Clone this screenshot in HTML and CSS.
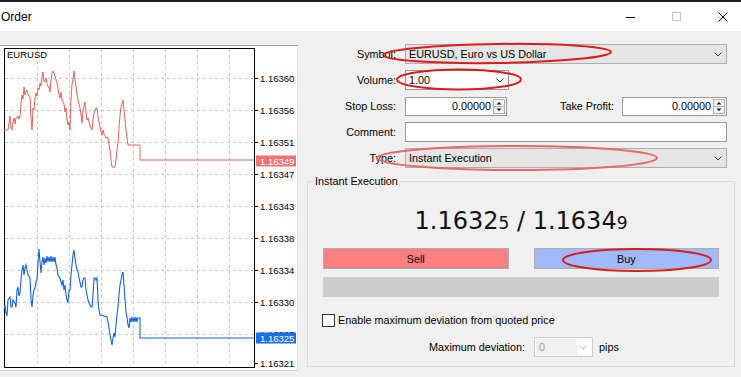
FILE: index.html
```html
<!DOCTYPE html>
<html>
<head>
<meta charset="utf-8">
<title>Order</title>
<link rel="stylesheet" href="styles.css">
</head>
<body>
<div class="topline"></div>
<header class="titlebar">
  <span class="title">Order</span>
  <div class="controls">
    <svg class="ctl" width="10" height="10" viewBox="0 0 10 10"><line x1="0" y1="5.5" x2="9" y2="5.5" stroke="#000"/></svg>
    <svg class="ctl" width="10" height="10" viewBox="0 0 10 10"><rect x="0.5" y="0.5" width="8" height="8" fill="none" stroke="#c4c4c4"/></svg>
    <svg class="ctl" width="10" height="10" viewBox="0 0 10 10"><path d="M0.5 0.5L9.5 9.5M9.5 0.5L0.5 9.5" stroke="#000" fill="none"/></svg>
  </div>
</header>
<main class="main">
  <section class="chart-panel">
    <svg class="chart" width="298" height="326" viewBox="0 45 298 326">
      <rect x="0" y="45" width="298" height="326" fill="#fff"/>
      <line x1="0" y1="45.5" x2="298" y2="45.5" stroke="#a0a0a0"/>
      <line x1="297.5" y1="46" x2="297.5" y2="371" stroke="#e0e0e0"/>
      <line x1="0" y1="370.5" x2="298" y2="370.5" stroke="#d6d6d6"/>
      <g stroke="#c9c9c9" stroke-dasharray="3 3" fill="none">
        <line x1="37.5" y1="49" x2="37.5" y2="367"/>
        <line x1="69.5" y1="49" x2="69.5" y2="367"/>
        <line x1="101.5" y1="49" x2="101.5" y2="367"/>
        <line x1="133.5" y1="49" x2="133.5" y2="367"/>
        <line x1="165.5" y1="49" x2="165.5" y2="367"/>
        <line x1="197.5" y1="49" x2="197.5" y2="367"/>
        <line x1="229.5" y1="49" x2="229.5" y2="367"/>
        <line x1="5" y1="78.5" x2="254" y2="78.5"/>
        <line x1="5" y1="110.5" x2="254" y2="110.5"/>
        <line x1="5" y1="142.5" x2="254" y2="142.5"/>
        <line x1="5" y1="174.5" x2="254" y2="174.5"/>
        <line x1="5" y1="206.5" x2="254" y2="206.5"/>
        <line x1="5" y1="238.5" x2="254" y2="238.5"/>
        <line x1="5" y1="270.5" x2="254" y2="270.5"/>
        <line x1="5" y1="302.5" x2="254" y2="302.5"/>
        <line x1="5" y1="334.5" x2="254" y2="334.5"/>
      </g>
      <rect x="4.5" y="48.5" width="250" height="319" fill="none" stroke="#000"/>
      <g stroke="#000">
        <line x1="255" y1="78.5" x2="258" y2="78.5"/>
        <line x1="255" y1="110.5" x2="258" y2="110.5"/>
        <line x1="255" y1="142.5" x2="258" y2="142.5"/>
        <line x1="255" y1="174.5" x2="258" y2="174.5"/>
        <line x1="255" y1="206.5" x2="258" y2="206.5"/>
        <line x1="255" y1="238.5" x2="258" y2="238.5"/>
        <line x1="255" y1="270.5" x2="258" y2="270.5"/>
        <line x1="255" y1="302.5" x2="258" y2="302.5"/>
        <line x1="255" y1="363.5" x2="258" y2="363.5"/>
      </g>
      <text class="sym" x="7" y="58">EURUSD</text>
      <g class="axis">
        <text x="260" y="82">1.16360</text>
        <text x="260" y="114">1.16356</text>
        <text x="260" y="146">1.16351</text>
        <text x="260" y="178">1.16347</text>
        <text x="260" y="210">1.16343</text>
        <text x="260" y="242">1.16338</text>
        <text x="260" y="274">1.16334</text>
        <text x="260" y="306">1.16330</text>
        <text x="260" y="338">1.16325</text>
        <text x="260" y="367">1.16321</text>
      </g>
      <polyline class="ask" points="4,130 8,130 10,116 11,128 12,130 13,122 14,118 15,124 16,118 18,116 19,119 20,116 21,104 22,95 23,99 24,87 25,95 26,91 27,90 28,94 29,96 30,97 31,118 32,130 33,108 34,110 35,98 36,93 37,96 38,88 39,90 40,83 41,86 42,77 43,72 44,82 45,80 46,78 47,84 48,86 49,88 50,92 51,80 52,73 53,71 54,73 55,76 56,80 57,83 58,88 59,95 60,98 61,92 62,100 63,102 64,104 65,112 66,108 67,120 68,125 69,122 70,130 71,100 72,84 73,80 74,71 75,80 76,87 77,94 78,100 79,104 80,108 81,115 82,123 83,110 84,106 85,102 86,112 87,120 88,118 89,122 90,125 91,128 92,130 93,120 94,113 95,110 96,108 97,108 98,117 99,122 100,127 101,132 102,135 103,130 104,134 105,136 106,138 107,137 108,138 109,144 110,150 111,160 112,167 115,167 116,160 117,150 118,143 119,128 120,116 121,107 122,104 123,100 124,110 125,120 126,130 127,137 128,145 140,145 140,160 254,160"/>
      <polyline class="bid" points="4,310 5,305 6,313 7,316 8,300 10,297 11,307 12,307 13,300 15,303 16,307 17,290 18,287 19,296 20,293 21,280 22,270 23,265 24,275 25,268 26,265 27,270 28,275 29,276 30,278 31,300 32,307 33,295 34,290 35,288 36,282 37,280 38,262 39,249 40,262 41,273 42,262 43,257 44,265 45,258 46,263 47,256 48,262 49,257 50,262 51,256 52,262 53,257 54,262 55,257 56,265 57,268 58,275 59,277 60,278 61,282 62,285 63,280 64,290 65,285 66,295 67,300 68,302 69,290 70,290 71,275 72,265 73,255 74,250 75,258 76,265 77,270 78,272 79,278 80,282 81,287 82,287 83,280 84,278 85,278 86,290 87,295 88,300 89,303 90,305 91,307 92,307 93,295 94,278 95,278 96,280 97,278 98,300 99,310 100,315 104,316 107,317 108,322 109,328 110,335 111,340 112,345 113,338 114,333 115,337 116,325 117,315 118,307 119,295 120,285 121,280 122,275 123,272 124,285 125,300 126,312 127,317 128,325 129,328 130,318 131,322 132,317 133,322 134,317 135,322 136,317 137,322 138,318 140,318 140,338 254,338"/>
      <rect x="256" y="155.5" width="40" height="11" fill="#f47171"/>
      <text class="badge" x="260" y="164.5">1.16349</text>
      <rect x="256" y="332.5" width="40" height="11" fill="#1c6de6"/>
      <text class="badge" x="260" y="341.5">1.16325</text>
    </svg>
  </section>
  <section class="right">
    <div class="form">
      <div class="row">
        <span class="lbl">Symbol:</span>
        <div class="select wide">EURUSD, Euro vs US Dollar
          <svg class="chev" width="8" height="5" viewBox="0 0 8 5"><polyline points="0.5,0.5 4,4 7.5,0.5" fill="none" stroke="#333"/></svg>
        </div>
      </div>
      <div class="row">
        <span class="lbl">Volume:</span>
        <div class="combo">1.00
          <svg class="chev" width="8" height="5" viewBox="0 0 8 5"><polyline points="0.5,0.5 4,4 7.5,0.5" fill="none" stroke="#333"/></svg>
        </div>
      </div>
      <div class="row">
        <span class="lbl">Stop Loss:</span>
        <div class="num sl">0.00000
          <svg class="spin" width="12" height="15" viewBox="0 0 12 15"><rect x="0.5" y="0.5" width="11" height="14" fill="#f2f2f2" stroke="#adadad"/><line x1="1" y1="7.5" x2="11" y2="7.5" stroke="#adadad"/><path d="M3.5 5.5h5L6 3z M3.5 9.5h5L6 12z" fill="#111"/></svg>
        </div>
        <span class="lbl2">Take Profit:</span>
        <div class="num tp">0.00000
          <svg class="spin" width="12" height="15" viewBox="0 0 12 15"><rect x="0.5" y="0.5" width="11" height="14" fill="#f2f2f2" stroke="#adadad"/><line x1="1" y1="7.5" x2="11" y2="7.5" stroke="#adadad"/><path d="M3.5 5.5h5L6 3z M3.5 9.5h5L6 12z" fill="#111"/></svg>
        </div>
      </div>
      <div class="row">
        <span class="lbl">Comment:</span>
        <div class="text wide"></div>
      </div>
      <div class="row">
        <span class="lbl">Type:</span>
        <div class="select wide">Instant Execution
          <svg class="chev" width="8" height="5" viewBox="0 0 8 5"><polyline points="0.5,0.5 4,4 7.5,0.5" fill="none" stroke="#333"/></svg>
        </div>
      </div>
    </div>
    <fieldset class="group">
      <legend>Instant Execution</legend>
      <div class="price">1.1632<span class="pip">5</span> / 1.1634<span class="pip">9</span></div>
      <div class="buttons">
        <button class="btn sell">Sell</button>
        <button class="btn buy">Buy</button>
      </div>
      <div class="bar"></div>
      <div class="check"><span class="box"></span><span>Enable maximum deviation from quoted price</span></div>
      <div class="dev">
        <span>Maximum deviation:</span>
        <div class="devsel"><span class="devval">0</span>
          <svg class="chev" width="8" height="5" viewBox="0 0 8 5"><polyline points="0.5,0.5 4,4 7.5,0.5" fill="none" stroke="#b5b5b5"/></svg>
        </div>
        <span class="pips">pips</span>
      </div>
    </fieldset>
  </section>
</main>
<svg class="marks" width="741" height="377" viewBox="0 0 741 377">
  <ellipse cx="497" cy="53.5" rx="114" ry="9.5" fill="none" stroke="#df1a1a" stroke-width="2" transform="rotate(-0.8 497 53.5)"/>
  <ellipse cx="459" cy="79.5" rx="62" ry="10" fill="none" stroke="#df1a1a" stroke-width="2"/>
  <ellipse cx="517" cy="158" rx="140" ry="12" fill="none" stroke="#e66a66" stroke-width="2"/>
  <ellipse cx="637" cy="260" rx="74" ry="11" fill="none" stroke="#d81c1c" stroke-width="2"/>
</svg>
</body>
</html>
```

FILE: styles.css
```css
html, body {
  margin: 0;
  padding: 0;
}
body {
  width: 741px;
  height: 377px;
  overflow: hidden;
  position: relative;
  background: #f0f0f0;
  font-family: "Liberation Sans", Arial, sans-serif;
  font-size: 10.8px;
  color: #000;
}
.topline {
  height: 2px;
  background: #1e1e1e;
}
.titlebar {
  height: 29px;
  background: #fff;
  display: flex;
  align-items: center;
  justify-content: space-between;
}
.title {
  font-size: 12px;
  padding-left: 1px;
}
.controls {
  display: flex;
  align-items: center;
  gap: 36px;
  padding-right: 13px;
}
.ctl {
  display: block;
}
.main {
  display: flex;
  padding-top: 13px;
}
.chart-panel {
  width: 298px;
  height: 326px;
  margin-top: 1px;
  flex: none;
}
.chart {
  display: block;
}
.chart .sym {
  font-family: "Liberation Sans", Arial, sans-serif;
  font-size: 9.5px;
  fill: #000;
}
.chart .axis text {
  font-family: "Liberation Sans", Arial, sans-serif;
  font-size: 9.5px;
  fill: #000;
}
.chart .badge {
  font-family: "Liberation Sans", Arial, sans-serif;
  font-size: 9.5px;
  fill: #fff;
}
.ask {
  fill: none;
  stroke: #e8625c;
  stroke-width: 1;
}
.bid {
  fill: none;
  stroke: #1463dc;
  stroke-width: 1.1;
}
.right {
  flex: 1;
}
.form {
  width: 429px;
}
.row {
  display: flex;
  align-items: center;
  height: 20px;
  margin-bottom: 6px;
}
.lbl {
  width: 98px;
  text-align: right;
  margin-right: 9px;
  flex: none;
}
.lbl2 {
  flex: 1;
  text-align: right;
  margin-right: 8px;
}
.select, .combo, .num, .text {
  box-sizing: border-box;
  height: 20px;
  display: flex;
  align-items: center;
  flex: none;
}
.select {
  border: 1px solid #adadad;
  background: #e5e5e5;
  padding-left: 3px;
}
.wide {
  width: 322px;
}
.chev {
  display: block;
  margin-left: auto;
  margin-right: 4px;
}
.combo {
  width: 104px;
  border: 1px solid #9a9a9a;
  background: #fff;
  padding-left: 3px;
}
.num {
  height: 19px;
  border: 1px solid #9a9a9a;
  background: #fff;
  justify-content: flex-end;
}
.sl {
  width: 102px;
}
.tp {
  width: 105px;
}
.spin {
  display: block;
  margin: 0 1px 0 2px;
}
.text {
  border: 1px solid #9a9a9a;
  background: #fff;
}
.group {
  margin: 3px 6px 0 9px;
  padding: 0 15px 9px 15px;
  border: 1px solid #dcdcdc;
  min-width: 0;
}
.group legend {
  padding: 0 1px;
  margin-left: -9px;
  line-height: 14px;
  font-size: 10.8px;
}
.price {
  margin-top: 19px;
  height: 28px;
  line-height: 28px;
  text-align: center;
  font-family: "DejaVu Sans", Verdana, sans-serif;
  font-size: 24px;
  color: #111;
}
.pip {
  font-size: 17px;
}
.buttons {
  display: flex;
  gap: 25px;
  margin-top: 13px;
}
.btn {
  flex: 1;
  height: 21px;
  margin: 0;
  padding: 0;
  border: 1px solid #adadad;
  font-family: "Liberation Sans", Arial, sans-serif;
  font-size: 10.8px;
  color: #000;
}
.sell {
  background: #ff8080;
}
.buy {
  background: #a1b9ff;
}
.bar {
  margin-top: 8px;
  height: 20px;
  background: #cccccc;
}
.check {
  margin-top: 16px;
  height: 14px;
  display: flex;
  align-items: center;
}
.box {
  box-sizing: border-box;
  width: 13px;
  height: 13px;
  border: 1px solid #333;
  background: #fff;
  margin-left: -1px;
  margin-right: 3px;
}
.dev {
  margin-top: 10px;
  height: 20px;
  display: flex;
  align-items: center;
  padding-left: 106px;
}
.devsel {
  box-sizing: border-box;
  width: 59px;
  height: 20px;
  margin-left: 9px;
  border: 1px solid #cccccc;
  background: #fff;
  display: flex;
  align-items: center;
  padding: 1px;
}
.devval {
  width: 38px;
  height: 100%;
  background: #f0f0f0;
  color: #a0a0a0;
  padding-left: 3px;
  display: flex;
  align-items: center;
}
.pips {
  margin-left: 6px;
}
.marks {
  position: absolute;
  left: 0;
  top: 0;
  pointer-events: none;
}
```
